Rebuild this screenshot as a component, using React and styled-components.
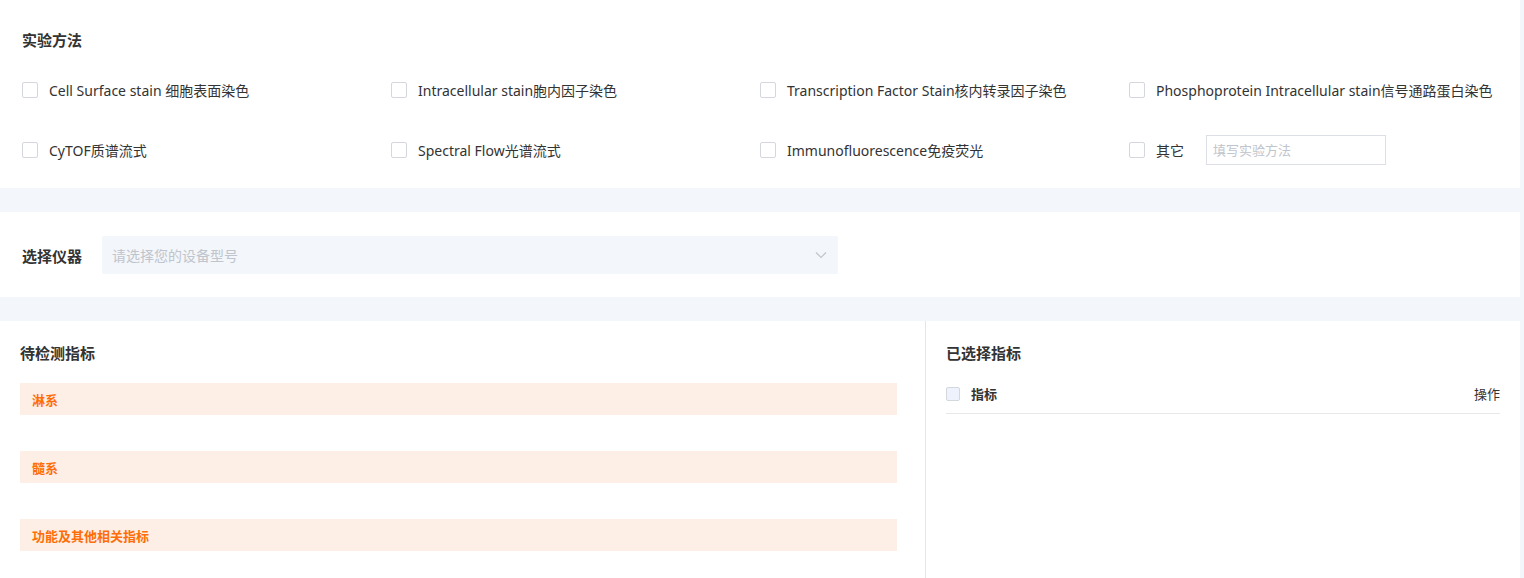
import React, { useState } from 'react'
import styled, { createGlobalStyle } from 'styled-components'

const GlobalStyle = createGlobalStyle`
    html, body {
        margin: 0;
        padding: 0;
        background-color: #f3f6fa;
        font-family: "Noto Sans", "Noto Sans CJK SC", sans-serif;
        color: #333;
    }
    * {
        box-sizing: border-box;
    }
`;

const Page = styled.div`
    width: 1520px;
    display: flex;
    flex-direction: column;
    gap: 24px;
`;
const Section = styled.section`
    background-color: #fff;
    padding: ${(props) => props.$padding || '0'};
`;
const Title = styled.h3`
    margin: 0;
    font-size: 15px;
    font-weight: 700;
    color: #333;
    line-height: 22px;
`;
const MethodGrid = styled.div`
    display: grid;
    grid-template-columns: repeat(4, 369px);
    row-gap: 30px;
    margin-top: 24px;
`;
const CheckLabel = styled.label`
    display: flex;
    align-items: center;
    height: 30px;
    font-size: 14px;
    color: #333;
    white-space: nowrap;
    cursor: pointer;
`;
const Box = styled.span`
    width: ${(props) => props.$size || 16}px;
    height: ${(props) => props.$size || 16}px;
    border: 1px solid #d4d7de;
    border-radius: 2px;
    background-color: ${(props) => props.$fill || '#fff'};
    margin-right: ${(props) => props.$gap || 11}px;
    flex-shrink: 0;
`;
const OtherInput = styled.input`
    width: 180px;
    height: 30px;
    margin-left: 22px;
    border: 1px solid #dcdfe6;
    padding: 0 6px;
    font-size: 13px;
    font-family: inherit;
    outline: none;
    &::placeholder {
        color: #c0c4cc;
    }
`;
const DeviceRow = styled.div`
    display: flex;
    align-items: center;
    gap: 20px;
`;
const DeviceLabel = styled.span`
    font-size: 15px;
    font-weight: 700;
    color: #333;
`;
const Select = styled.div`
    width: 736px;
    height: 38px;
    background-color: #f3f6fa;
    border-radius: 2px;
    display: flex;
    align-items: center;
    justify-content: space-between;
    padding: 0 11px 0 10px;
    font-size: 14px;
    color: #c0c4cc;
`;
const Split = styled.div`
    display: flex;
    min-height: 257px;
`;
const LeftPanel = styled.div`
    width: 926px;
    padding: 21px 28px 0 20px;
    border-right: 1px solid #e6e6e6;
`;
const RightPanel = styled.div`
    flex: 1;
    padding: 21px 20px 0 20px;
`;
const GroupList = styled.div`
    display: flex;
    flex-direction: column;
    gap: 36px;
    margin-top: 19px;
`;
const GroupBar = styled.div`
    height: 32px;
    background-color: #fdefe5;
    color: #ff6d08;
    font-size: 13px;
    font-weight: 700;
    display: flex;
    align-items: center;
    padding-left: 12px;
`;
const TableHead = styled.div`
    display: flex;
    align-items: center;
    height: 40px;
    margin-top: 10px;
    border-bottom: 1px solid #e8e8e8;
    font-size: 13px;
`;
const HeadCell = styled.span`
    font-weight: ${(props) => (props.$bold ? 700 : 400)};
    margin-left: ${(props) => (props.$right ? 'auto' : '0')};
    color: #333;
`;

const methods = [
    'Cell Surface stain 细胞表面染色',
    'Intracellular stain胞内因子染色',
    'Transcription Factor Stain核内转录因子染色',
    'Phosphoprotein Intracellular stain信号通路蛋白染色',
    'CyTOF质谱流式',
    'Spectral Flow光谱流式',
    'Immunofluorescence免疫荧光',
];

const groups = ['淋系', '髓系', '功能及其他相关指标'];

function Chevron() {
    return (
        <svg width="12" height="8" viewBox="0 0 12 8" fill="none">
            <path d="M1 1.5L6 6.5L11 1.5" stroke="#c0c4cc" strokeWidth="1.2" />
        </svg>
    )
}

function App() {
    const [other, setOther] = useState('');

    return (
        <>
            <GlobalStyle />
            <Page>
                <Section $padding="29px 22px 23px 22px">
                    <Title>实验方法</Title>
                    <MethodGrid>
                        {methods.map((m) => (
                            <CheckLabel key={m}>
                                <Box />
                                {m}
                            </CheckLabel>
                        ))}
                        <CheckLabel>
                            <Box />
                            其它
                            <OtherInput placeholder="填写实验方法" value={other} onChange={(e) => setOther(e.target.value)} />
                        </CheckLabel>
                    </MethodGrid>
                </Section>
                <Section $padding="24px 22px 23px 22px">
                    <DeviceRow>
                        <DeviceLabel>选择仪器</DeviceLabel>
                        <Select>
                            请选择您的设备型号
                            <Chevron />
                        </Select>
                    </DeviceRow>
                </Section>
                <Section>
                    <Split>
                        <LeftPanel>
                            <Title>待检测指标</Title>
                            <GroupList>
                                {groups.map((g) => (
                                    <GroupBar key={g}>{g}</GroupBar>
                                ))}
                            </GroupList>
                        </LeftPanel>
                        <RightPanel>
                            <Title>已选择指标</Title>
                            <TableHead>
                                <Box $size={14} $fill="#edf2fc" $gap={11} />
                                <HeadCell $bold>指标</HeadCell>
                                <HeadCell $right>操作</HeadCell>
                            </TableHead>
                        </RightPanel>
                    </Split>
                </Section>
            </Page>
        </>
    )
}

export default App
